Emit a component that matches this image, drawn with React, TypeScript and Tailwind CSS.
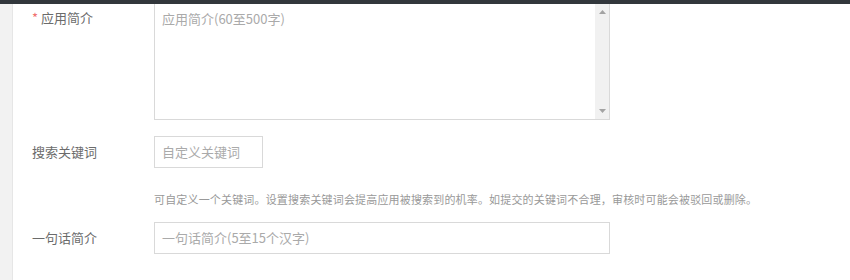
import React from "react";

const font = { fontFamily: '"Noto Sans CJK SC", "Noto Sans", sans-serif' };

function Label({ children, required }: { children: React.ReactNode; required?: boolean }) {
  return (
    <div className="w-[122px] shrink-0 text-[13px] leading-[20px] text-[#6b6b6b]">
      {required && <span className="mr-[3px] text-[#f07070]">*</span>}
      {children}
    </div>
  );
}

export default function App() {
  return (
    <div className="flex h-[280px] w-[850px] flex-col bg-white" style={font}>
      <div className="h-[4px] bg-[#32373c]" />
      <div className="flex flex-1">
        <div className="w-[13px] border-r border-[#e6e6e6] bg-[#f2f2f2]" />
        <div className="flex-1 pl-[19px]">
          {/* 应用简介 */}
          <div className="flex">
            <div className="pt-[4px]">
              <Label required>应用简介</Label>
            </div>
            <div className="flex h-[116px] w-[456px] border-x border-b border-[#d9d9d9]">
              <div className="flex-1 px-[7px] pt-[5px] text-[13px] leading-[20px] text-[#aaa]">
                应用简介(60至500字)
              </div>
              <div className="flex w-[14px] flex-col items-center justify-between bg-[#f1f1f1] py-[6px]">
                <svg width="7" height="4" viewBox="0 0 7 4">
                  <path d="M0 4 L3.5 0 L7 4 Z" fill="#a3a3a3" />
                </svg>
                <svg width="7" height="4" viewBox="0 0 7 4">
                  <path d="M0 0 L3.5 4 L7 0 Z" fill="#a3a3a3" />
                </svg>
              </div>
            </div>
          </div>

          {/* 搜索关键词 */}
          <div className="mt-[16px] flex items-center">
            <Label>搜索关键词</Label>
            <div className="flex h-[32px] w-[109px] items-center border border-[#d9d9d9] px-[7px] text-[13px] text-[#aaa]">
              自定义关键词
            </div>
          </div>

          <div className="mt-[23px] pl-[122px] text-[11px] leading-[16px] tracking-[0.17px] text-[#999]">
            可自定义一个关键词。设置搜索关键词会提高应用被搜索到的机率。如提交的关键词不合理，审核时可能会被驳回或删除。
          </div>

          {/* 一句话简介 */}
          <div className="mt-[15px] flex items-center">
            <Label>一句话简介</Label>
            <div className="flex h-[32px] w-[456px] items-center border border-[#d9d9d9] px-[7px] text-[13px] text-[#aaa]">
              一句话简介(5至15个汉字)
            </div>
          </div>
        </div>
      </div>
    </div>
  );
}
